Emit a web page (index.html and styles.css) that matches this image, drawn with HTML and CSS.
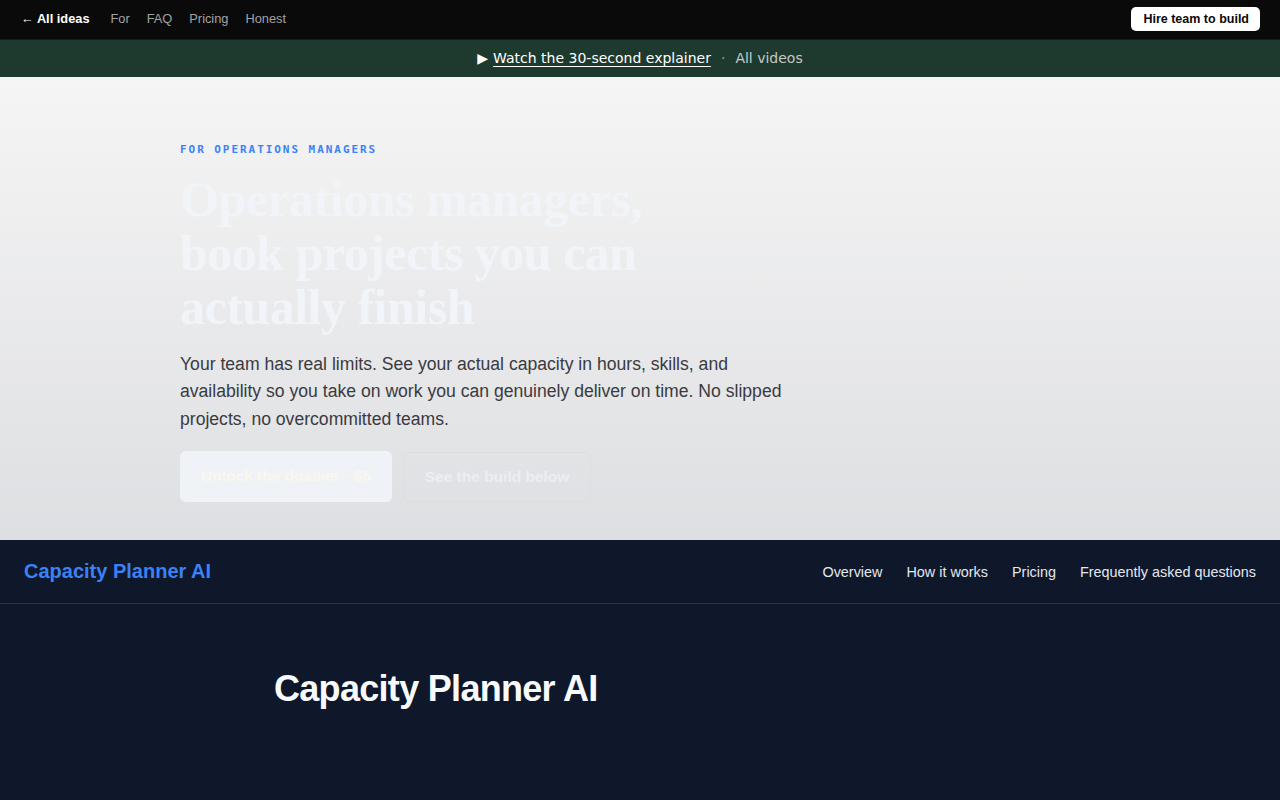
FILE: index.html
```html
<!DOCTYPE html>
<html lang="en">
<head>
    <meta charset="UTF-8">
    <meta name="viewport" content="width=device-width, initial-scale=1.0">
    <title>Capacity Planner AI</title>
    <link rel="stylesheet" href="styles.css">
</head>
<body>
    <!-- Top bar -->
    <header class="topbar">
        <nav class="topbar-links">
            <a href="#" class="back">&larr; All ideas</a>
            <a href="#">For</a>
            <a href="#">FAQ</a>
            <a href="#">Pricing</a>
            <a href="#">Honest</a>
        </nav>
        <a href="#" class="hire">Hire team to build</a>
    </header>

    <!-- Video banner -->
    <div class="banner">
        <span class="play">&#9654;</span>
        <a href="#" class="watch">Watch the 30-second explainer</a>
        <span class="dot">&middot;</span>
        <a href="#" class="all-videos">All videos</a>
    </div>

    <!-- Hero -->
    <section class="hero">
        <div class="hero-inner">
            <p class="eyebrow">For operations managers</p>
            <h1 class="hero-title">Operations managers, book projects you can actually finish</h1>
            <p class="hero-text">Your team has real limits. See your actual capacity in hours, skills, and availability so you take on work you can genuinely deliver on time. No slipped projects, no overcommitted teams.</p>
            <div class="hero-actions">
                <a href="#" class="btn btn-primary">Unlock the dossier &middot; $5</a>
                <a href="#" class="btn btn-ghost">See the build below</a>
            </div>
        </div>
    </section>

    <!-- Product -->
    <section class="product">
        <nav class="product-nav">
            <a href="#" class="brand">Capacity Planner AI</a>
            <div class="product-links">
                <a href="#">Overview</a>
                <a href="#">How it works</a>
                <a href="#">Pricing</a>
                <a href="#">Frequently asked questions</a>
            </div>
        </nav>
        <div class="product-hero">
            <h2>Capacity Planner AI</h2>
        </div>
    </section>
</body>
</html>
```

FILE: styles.css
```css
body {
    font-family: "Liberation Sans", Arial, sans-serif;
    margin: 0;
    padding: 0;
    background: #0f172a;
}
a {
    text-decoration: none;
    color: inherit;
}
.topbar {
    height: 40px;
    box-sizing: border-box;
    padding: 0 20px 2px 21px;
    background: #0a0a0a;
    border-bottom: 1px solid #1a1a1a;
    display: flex;
    align-items: center;
    justify-content: space-between;
}
.topbar-links {
    display: flex;
    align-items: center;
    gap: 17px;
    font-size: 12.8px;
    color: #a3a3a3;
}
.topbar-links .back {
    color: #fff;
    font-weight: bold;
    margin-right: 4px;
}
.hire {
    background: #fff;
    color: #0a0a0a;
    font-size: 12.5px;
    font-weight: bold;
    padding: 5px 11px 5px 12px;
    border-radius: 5px;
    margin-top: 1px;
}
.banner {
    height: 37px;
    box-sizing: border-box;
    padding-bottom: 1px;
    background: #1e3a2f;
    display: flex;
    align-items: center;
    justify-content: center;
    gap: 5px;
    font-family: "DejaVu Sans", sans-serif;
    font-size: 14px;
    color: #fff;
}
.banner .watch {
    text-decoration: underline;
    text-underline-offset: 3px;
}
.banner .dot {
    color: #9ca3af;
    margin: 0 5px;
}
.banner .all-videos {
    color: #c4c9c6;
}
.hero {
    height: 463px;
    background: linear-gradient(180deg, #f5f5f5 0%, #dedfe2 100%);
    box-sizing: border-box;
    padding-top: 66px;
}
.hero-inner {
    margin-left: 180px;
    max-width: 620px;
}
.eyebrow {
    margin: 0;
    font-family: "DejaVu Sans Mono", monospace;
    font-weight: bold;
    font-size: 11px;
    letter-spacing: 1.95px;
    text-transform: uppercase;
    color: #3b82f6;
}
.hero-title {
    margin: 16px 0 0;
    max-width: 500px;
    font-family: "Liberation Serif", "Times New Roman", serif;
    font-size: 50px;
    line-height: 54px;
    font-weight: bold;
    letter-spacing: -0.5px;
    color: #f1f4f8;
}
.hero-text {
    margin: 17px 0 0;
    font-size: 17.6px;
    line-height: 27.3px;
    color: #3a3a3f;
}
.hero-actions {
    display: flex;
    gap: 11px;
    margin-top: 18px;
}
.btn {
    height: 51px;
    display: flex;
    align-items: center;
    box-sizing: border-box;
    border-radius: 6px;
    font-size: 15.5px;
    font-weight: bold;
}
.btn-primary {
    background: #eff3f8;
    color: #fbf7ec;
    padding: 0 21px;
}
.btn-ghost {
    border: 1px solid #dcdee2;
    color: #eceef4;
    padding: 0 21px;
    margin-top: 1px;
    height: 50px;
}
.product {
    background: #0f172a;
    height: 260px;
}
.product-nav {
    height: 63px;
    display: flex;
    align-items: center;
    justify-content: space-between;
    padding: 0 24px;
    border-bottom: 1px solid #273244;
}
.brand {
    font-size: 20px;
    font-weight: bold;
    color: #3b82f6;
}
.product-links {
    display: flex;
    gap: 24px;
    font-size: 14.4px;
    color: #e2e8f0;
}
.product-hero {
    padding: 64px 0 0 274px;
}
.product-hero h2 {
    margin: 0;
    font-size: 36px;
    font-weight: bold;
    color: #f8fafc;
    letter-spacing: -0.7px;
}
```
